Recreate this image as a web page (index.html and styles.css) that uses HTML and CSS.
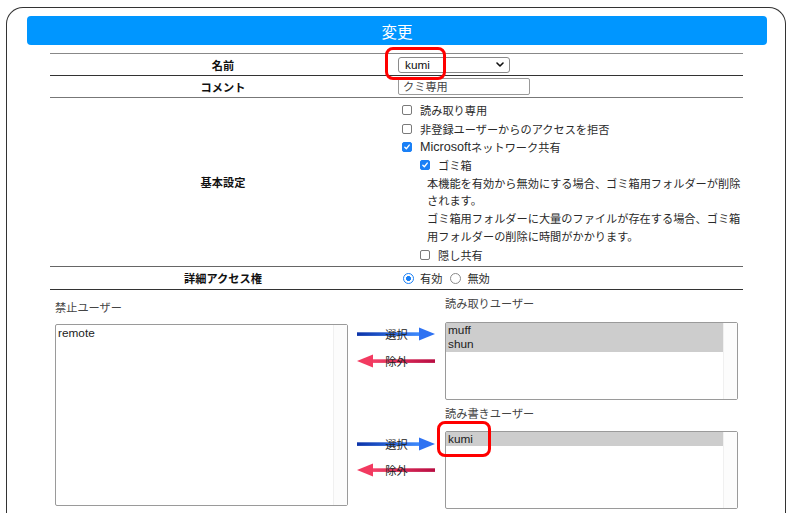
FILE: index.html
```html
<!DOCTYPE html>
<html lang="ja">
<head>
<meta charset="utf-8">
<title>変更</title>
<link rel="stylesheet" href="styles.css">
</head>
<body>
<div class="panel">
  <div class="title">変更</div>
  <div class="content">
    <div class="form">
      <div class="row r-name">
        <div class="lbl">名前</div>
        <div class="val">
          <div class="select"><span>kumi</span>
            <svg class="chev" width="8" height="5" viewBox="0 0 8 5"><path d="M1 1 L4 4 L7 1" fill="none" stroke="#111" stroke-width="1.6" stroke-linecap="round" stroke-linejoin="round"/></svg>
          </div>
        </div>
      </div>
      <div class="row r-comment">
        <div class="lbl">コメント</div>
        <div class="val"><div class="text">クミ専用</div></div>
      </div>
      <div class="row r-basic">
        <div class="lbl">基本設定</div>
        <div class="val opts">
          <div class="opt"><span class="cb"></span>読み取り専用</div>
          <div class="opt"><span class="cb"></span>非登録ユーザーからのアクセスを拒否</div>
          <div class="opt"><span class="cb on"><svg width="10" height="10" viewBox="0 0 10 10"><path d="M2.3 5.2 L4.2 7.2 L7.8 2.6" fill="none" stroke="#fff" stroke-width="1.7" stroke-linecap="round" stroke-linejoin="round"/></svg></span><span class="latin">Microsoft</span>ネットワーク共有</div>
          <div class="opt sub"><span class="cb on"><svg width="10" height="10" viewBox="0 0 10 10"><path d="M2.3 5.2 L4.2 7.2 L7.8 2.6" fill="none" stroke="#fff" stroke-width="1.7" stroke-linecap="round" stroke-linejoin="round"/></svg></span>ゴミ箱</div>
          <div class="desc">本機能を有効から無効にする場合、ゴミ箱用フォルダーが削除<br>されます。<br>ゴミ箱用フォルダーに大量のファイルが存在する場合、ゴミ箱<br>用フォルダーの削除に時間がかかります。</div>
          <div class="opt sub"><span class="cb"></span>隠し共有</div>
        </div>
      </div>
      <div class="row r-access">
        <div class="lbl">詳細アクセス権</div>
        <div class="val radios">
          <span class="rd on"></span><span class="rtxt">有効</span>
          <span class="rd"></span><span class="rtxt">無効</span>
        </div>
      </div>
    </div>

    <div class="lists">
      <div class="col left">
        <div class="ltitle">禁止ユーザー</div>
        <div class="list big">
          <div class="items"><div class="item">remote</div></div>
          <div class="track"></div>
        </div>
      </div>
      <div class="col mid">
        <div class="arrow a1">
          <svg width="78" height="14" viewBox="0 0 78 14">
            <defs><linearGradient id="gb" x1="0" x2="1" y1="0" y2="0"><stop offset="0" stop-color="#0b33a8"/><stop offset="1" stop-color="#3f8cff"/></linearGradient></defs>
            <rect x="0" y="5.3" width="64" height="3.6" fill="url(#gb)"/>
            <polygon points="62,0.5 78,7 62,13.5" fill="#2e72f2"/>
          </svg>
          <span>選択</span>
        </div>
        <div class="arrow a2">
          <svg width="78" height="14" viewBox="0 0 78 14">
            <defs><linearGradient id="gr" x1="0" x2="1" y1="0" y2="0"><stop offset="0" stop-color="#f4436a"/><stop offset="1" stop-color="#b80d42"/></linearGradient></defs>
            <rect x="14" y="5.3" width="64" height="3.6" fill="url(#gr)"/>
            <polygon points="16,0.5 0,7 16,13.5" fill="#f23a60"/>
          </svg>
          <span>除外</span>
        </div>
        <div class="arrow a3">
          <svg width="78" height="14" viewBox="0 0 78 14">
            <rect x="0" y="5.3" width="64" height="3.6" fill="url(#gb)"/>
            <polygon points="62,0.5 78,7 62,13.5" fill="#2e72f2"/>
          </svg>
          <span>選択</span>
        </div>
        <div class="arrow a4">
          <svg width="78" height="14" viewBox="0 0 78 14">
            <rect x="14" y="5.3" width="64" height="3.6" fill="url(#gr)"/>
            <polygon points="16,0.5 0,7 16,13.5" fill="#f23a60"/>
          </svg>
          <span>除外</span>
        </div>
      </div>
      <div class="col right">
        <div class="ltitle rt1">読み取りユーザー</div>
        <div class="list small">
          <div class="items"><div class="item sel">muff</div><div class="item sel">shun</div></div>
          <div class="track"></div>
        </div>
        <div class="ltitle rt2">読み書きユーザー</div>
        <div class="list small s2">
          <div class="items"><div class="item sel">kumi</div></div>
          <div class="track"></div>
        </div>
      </div>
    </div>
  </div>
</div>
<div class="mark m1"></div>
<div class="mark m2"></div>
</body>
</html>
```

FILE: styles.css
```css
html { overflow: hidden; }
body {
  margin: 0;
  background: #fff;
  font-family: "Liberation Sans", "Noto Sans CJK JP", sans-serif;
  font-size: 11.2px;
  color: #2a2a2a;
}
.panel {
  margin: 7px 0 0 6px;
  width: 778px;
  height: 600px;
  border: 1px solid #333;
  border-bottom: none;
  border-radius: 17px 17px 0 0;
  padding-top: 8px;
}
.title {
  margin-left: 20px;
  width: 740px;
  height: 29px;
  background: #0096ff;
  border-radius: 4px;
  color: #fff;
  font-family: "Noto Sans CJK JP", sans-serif;
  font-size: 15.5px;
  display: flex;
  align-items: center;
  justify-content: center;
}
.content {
  margin-left: 43px;
  width: 693px;
  margin-top: 8px;
}
.form { border-top: 1px solid #888; }
.row {
  display: grid;
  grid-template-columns: 346px 347px;
  border-bottom: 1px solid #333;
}
.r-name { height: 21px; }
.r-comment { height: 21px; border-bottom-color: #777; }
.r-basic { height: 168px; border-bottom-color: #666; }
.r-access { height: 22px; border-bottom-color: #333; }
.lbl {
  display: flex;
  align-items: center;
  justify-content: center;
  font-family: "Noto Sans CJK JP", sans-serif;
  font-weight: bold;
  color: #111;
}
.val { display: flex; align-items: center; }
.select {
  margin-left: 2px;
  width: 112px;
  height: 16px;
  box-sizing: border-box;
  border: 1px solid #8a8a8a;
  border-radius: 3px;
  display: flex;
  align-items: center;
  justify-content: space-between;
  padding: 0 5px 0 6px;
  font-size: 11.8px;
  color: #111;
}
.chev { display: block; }
.text {
  margin-left: 2px;
  width: 132px;
  height: 17px;
  box-sizing: border-box;
  border: 1px solid #999;
  border-radius: 2px;
  padding-left: 4px;
  line-height: 15px;
  font-family: "Noto Sans CJK JP", sans-serif;
  color: #444;
}
.opts {
  flex-direction: column;
  align-items: stretch;
  justify-content: flex-start;
  padding-top: 3px;
}
.opt {
  height: 18.4px;
  display: flex;
  align-items: center;
  padding-left: 6px;
  white-space: nowrap;
}
.opt .latin { font-size: 12.6px; }
.opt.sub { padding-left: 24px; }
.cb {
  width: 10px;
  height: 10px;
  box-sizing: border-box;
  border: 1px solid #7a7a7a;
  border-radius: 2px;
  background: #fff;
  margin-right: 8px;
  display: flex;
  align-items: center;
  justify-content: center;
}
.cb.on { background: #1a80f6; border-color: #1a80f6; }
.cb svg { display: block; }
.desc {
  padding-left: 31px;
  line-height: 17.9px;
  white-space: nowrap;
  font-family: "Noto Sans CJK JP", sans-serif;
}
.radios { padding-left: 7px; }
.rd {
  width: 11px;
  height: 11px;
  box-sizing: border-box;
  border: 1px solid #8a8a8a;
  border-radius: 50%;
  background: #fff;
  margin-right: 6px;
}
.rd.on {
  border: 1.5px solid #1a80f6;
  background: radial-gradient(circle, #1a80f6 0 2.2px, #fff 2.8px);
}
.rtxt { margin-right: 8px; font-family: "Noto Sans CJK JP", sans-serif; }
.lists { display: flex; }
.col { display: flex; flex-direction: column; }
.left { width: 293px; margin-left: 5px; }
.mid { width: 97px; }
.right { width: 293px; }
.ltitle {
  height: 18px;
  line-height: 18px;
  font-family: "Noto Sans CJK JP", sans-serif;
  color: #444;
}
.left .ltitle { margin-top: 8px; }
.rt1 { margin-top: 4px; }
.rt2 { margin-top: 4px; }
.list {
  display: flex;
  box-sizing: border-box;
  border: 1px solid #9a9a9a;
  border-radius: 2px;
  background: #fff;
}
.list.big { margin-top: 8px; height: 182px; }
.list.small { margin-top: 10px; height: 78px; }
.list.s2 { margin-top: 9px; }
.items { flex: 1; }
.item {
  height: 14.4px;
  line-height: 14.4px;
  padding-left: 2px;
  font-size: 11.8px;
  color: #222;
}
.left .item { margin-top: 1px; }
.item.sel { background: #cdcdcd; }
.track {
  width: 13px;
  border-left: 1px solid #f0f0f0;
  background-color: #fcfcfc;
  background-image: radial-gradient(#e8e8e8 0.5px, transparent 0.7px);
  background-size: 2px 2px;
}
.arrow {
  display: grid;
  width: 78px;
  height: 14px;
  margin-left: 9px;
  font-family: "Noto Sans CJK JP", sans-serif;
  color: #222;
}
.arrow > * { grid-area: 1 / 1; }
.arrow svg { display: block; }
.arrow span {
  justify-self: center;
  align-self: center;
  line-height: 14px;
  padding-left: 1px;
}
.a1 { margin-top: 37px; }
.a2 { margin-top: 12.5px; }
.a3 { margin-top: 69px; }
.a4 { margin-top: 12px; }
.mark {
  position: absolute;
  box-sizing: border-box;
  border: 3.5px solid #ff0000;
  border-radius: 8px;
}
.m1 { left: 385px; top: 47px; width: 61px; height: 33px; }
.m2 { left: 437px; top: 421px; width: 54px; height: 36px; }
```
